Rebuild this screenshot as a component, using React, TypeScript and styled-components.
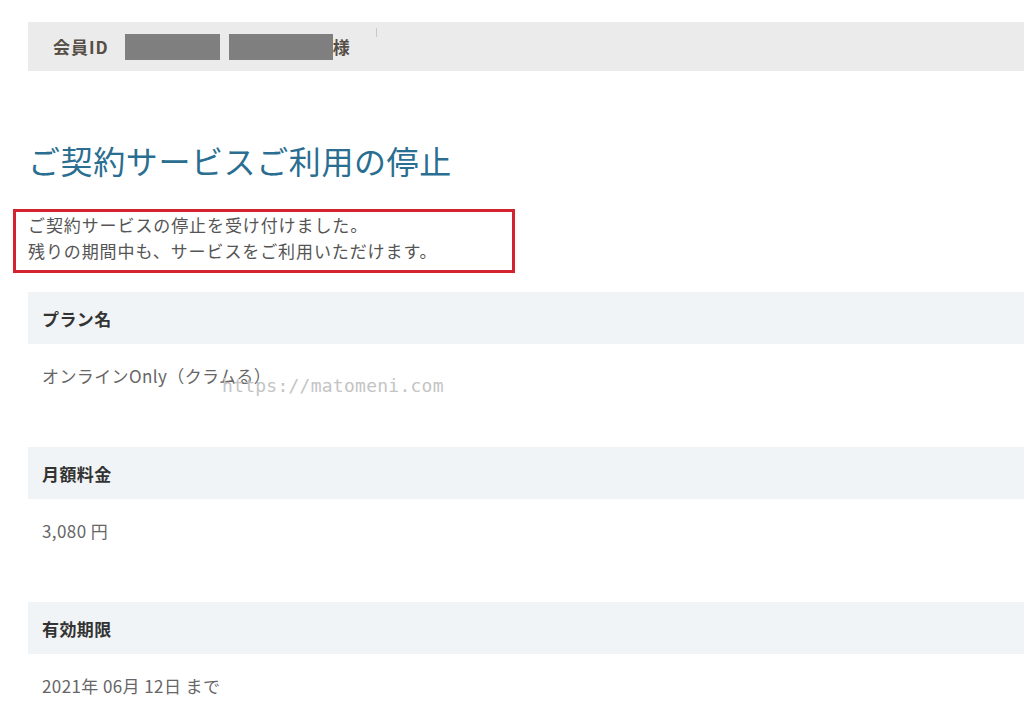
import React from 'react';
import styled, { createGlobalStyle } from 'styled-components';

const GlobalStyle = createGlobalStyle`
  html, body {
    margin: 0;
    padding: 0;
    background: #ffffff;
  }
  body {
    font-family: "Noto Sans CJK JP", "Noto Sans", sans-serif;
    color: #555555;
  }
`;

const Page = styled.div`
  position: relative;
  padding: 22px 0 40px 28px;
`;

const MemberBar = styled.div`
  display: flex;
  align-items: center;
  height: 49px;
  padding-left: 25px;
  background: #ebebeb;
`;

const MemberLabel = styled.span`
  font-size: 17px;
  font-weight: 700;
  line-height: 24px;
  letter-spacing: 1px;
  color: #574e47;
  margin-right: 16px;
`;

const Masked = styled.span<{ $width: number; $gap: number }>`
  display: inline-block;
  width: ${(p) => p.$width}px;
  height: 26px;
  margin-right: ${(p) => p.$gap}px;
  background: #7f7f7f;
`;

const Honorific = styled.span`
  font-size: 17px;
  font-weight: 700;
  line-height: 24px;
  color: #574e47;
`;

const Tick = styled.span`
  align-self: flex-start;
  width: 1px;
  height: 9px;
  margin: 6px 0 0 26px;
  background: #c8c8c8;
`;

const Title = styled.h1`
  margin: 69px 0 0;
  font-size: 32px;
  font-weight: 400;
  line-height: 40px;
  color: #2a6e91;
  letter-spacing: 0.6px;
`;

const Notice = styled.div`
  width: 472px;
  margin: 29px 0 0 -15px;
  padding: 0 12px 6px;
  border: 3px solid #d2232e;
  font-size: 17px;
  line-height: 26px;
  letter-spacing: 0.9px;
  color: #555555;
`;

const Section = styled.section`
  &:first-of-type {
    margin-top: 19px;
  }
`;

const SectionHead = styled.div`
  display: flex;
  align-items: center;
  height: 52px;
  padding-left: 14px;
  background: #f1f4f7;
  font-size: 17px;
  font-weight: 700;
  letter-spacing: 0.4px;
  color: #333333;
`;

const SectionValue = styled.div`
  padding: 19px 0 58px 14px;
  font-size: 17px;
  line-height: 26px;
  letter-spacing: 0.4px;
  color: #666666;
`;

const Watermark = styled.span`
  position: absolute;
  left: 222px;
  top: 373px;
  font-family: "DejaVu Sans Mono", "Liberation Mono", monospace;
  font-size: 18px;
  line-height: 26px;
  letter-spacing: 0.25px;
  color: #c4c4c4;
  pointer-events: none;
`;

const rows = [
  { label: 'プラン名', value: 'オンラインOnly（クラムる）' },
  { label: '月額料金', value: '3,080 円' },
  { label: '有効期限', value: '2021年 06月 12日 まで' },
];

const App: React.FC = () => (
  <>
    <GlobalStyle />
    <Page>
      <MemberBar>
        <MemberLabel>会員ID</MemberLabel>
        <Masked $width={95} $gap={9} />
        <Masked $width={104} $gap={0} />
        <Honorific>様</Honorific>
        <Tick />
      </MemberBar>

      <Title>ご契約サービスご利用の停止</Title>

      <Notice>
        ご契約サービスの停止を受け付けました。
        <br />
        残りの期間中も、サービスをご利用いただけます。
      </Notice>

      <div>
        {rows.map((row) => (
          <Section key={row.label}>
            <SectionHead>{row.label}</SectionHead>
            <SectionValue>{row.value}</SectionValue>
          </Section>
        ))}
      </div>

      <Watermark>https://matomeni.com</Watermark>
    </Page>
  </>
);

export default App;
